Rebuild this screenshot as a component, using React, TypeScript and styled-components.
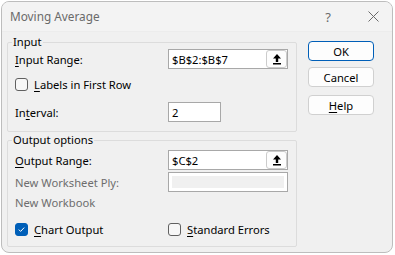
import React, { FC } from "react"
import styled, { createGlobalStyle } from "styled-components"

const GlobalStyle = createGlobalStyle`
  html, body {
    margin: 0;
    background: #ffffff;
  }
  body {
    font-family: "Segoe UI", "Noto Sans", sans-serif;
    font-size: 11.2px;
    color: #000000;
  }
`

const Window = styled.div`
  box-sizing: border-box;
  margin: 1px 0 0 1px;
  width: 392px;
  height: 252px;
  border: 1px solid #bdbdbd;
  border-radius: 8px;
  overflow: hidden;
  background: #f0f0f0;
  display: flex;
  flex-direction: column;
`

const TitleBar = styled.div`
  height: 29px;
  display: flex;
  align-items: center;
  padding-left: 8px;
  background: #f3f3f3;
  border-bottom: 1px solid #ececec;
`

const Title = styled.span`
  flex: 1;
  color: #6a6a6a;
  font-size: 11.8px;
  padding-bottom: 1px;
`

const TitleButton = styled.span<{ $w: number }>`
  width: ${p => p.$w}px;
  height: 29px;
  display: flex;
  align-items: center;
  justify-content: center;
  color: #6a6a6a;
  font-size: 13px;
`

const Body = styled.div`
  display: flex;
  padding: 3px 0 0 5px;
`

const Groups = styled.div`
  width: 290px;
  display: flex;
  flex-direction: column;
  gap: 1px;
`

const Group = styled.fieldset<{ $pt: number; $pb: number }>`
  margin: 0;
  padding: ${p => p.$pt}px 7px ${p => p.$pb}px 7px;
  border: 1px solid #dcdcdc;
  border-radius: 2px;
  min-width: 0;
`

const Legend = styled.legend`
  margin-left: -3px;
  padding: 0 1px;
  height: 14px;
  line-height: 14px;
`

const Row = styled.div<{ $mt?: number }>`
  display: grid;
  grid-template-columns: 153px 120px;
  align-items: center;
  height: 20px;
  margin-top: ${p => p.$mt ?? 0}px;
`

const Label = styled.span<{ $disabled?: boolean }>`
  color: ${p => (p.$disabled ? "#6d6d6d" : "#000000")};
  white-space: nowrap;
`

const Key = styled.span`
  text-decoration: underline;
  text-underline-offset: 2px;
  text-decoration-thickness: 1px;
`

const TextBox = styled.div<{ $w?: number }>`
  box-sizing: border-box;
  width: ${p => p.$w ?? 120}px;
  height: 20px;
  border: 1px solid #a8a8a8;
  background: #ffffff;
  display: flex;
  align-items: center;
  padding-left: 3px;
`

const DisabledBox = styled.div`
  box-sizing: border-box;
  width: 120px;
  height: 20px;
  border: 1px solid #a8a8a8;
  background: #f0f0f0;
  box-shadow: inset 0 0 0 3px #ffffff;
`

const BoxText = styled.span`
  flex: 1;
`

const RefButton = styled.span`
  box-sizing: border-box;
  width: 21px;
  height: 18px;
  border: 1px solid #cccccc;
  border-radius: 3px;
  background: #fdfdfd;
  display: flex;
  align-items: center;
  justify-content: center;
`

const CheckWrap = styled.span`
  display: flex;
  align-items: center;
  gap: 6px;
  white-space: nowrap;
`

const Box = styled.span<{ $checked?: boolean }>`
  box-sizing: border-box;
  width: 13px;
  height: 13px;
  border-radius: 3px;
  border: 1px solid ${p => (p.$checked ? "#005fb8" : "#606060")};
  background: ${p => (p.$checked ? "#005fb8" : "#f7f7f7")};
  display: flex;
  align-items: center;
  justify-content: center;
`

const Buttons = styled.div`
  margin: 6px 0 0 11px;
  display: flex;
  flex-direction: column;
`

const Button = styled.div<{ $default?: boolean; $mt?: number }>`
  box-sizing: border-box;
  width: 66px;
  height: 20px;
  margin-top: ${p => p.$mt ?? 0}px;
  border: 1px solid ${p => (p.$default ? "#005fb8" : "#d0d0d0")};
  border-radius: 4px;
  background: #fdfdfd;
  display: flex;
  align-items: center;
  justify-content: center;
`

const UpArrow: FC = () => (
  <svg width="10" height="12" viewBox="0 0 10 12">
    <path d="M5 1 L9 5.5 L6.2 5.5 L6.2 9 L3.8 9 L3.8 5.5 L1 5.5 Z" fill="#000" />
    <rect x="1" y="10" width="8" height="1.5" fill="#000" />
  </svg>
)

const CheckMark: FC = () => (
  <svg width="11" height="11" viewBox="0 0 11 11">
    <path d="M2.8 5.6 L4.6 7.4 L8.2 3.6" stroke="#fff" strokeWidth="1" fill="none" />
  </svg>
)

const Checkbox: FC<{ checked?: boolean; children: React.ReactNode }> = ({ checked, children }) => (
  <CheckWrap>
    <Box $checked={checked}>{checked && <CheckMark />}</Box>
    <Label>{children}</Label>
  </CheckWrap>
)

const App: FC = () => {
  return (
    <>
      <GlobalStyle />
      <Window>
        <TitleBar>
          <Title>Moving Average</Title>
          <TitleButton $w={46}>?</TitleButton>
          <TitleButton $w={3} />
          <TitleButton $w={38}>
            <svg width="11" height="11" viewBox="0 0 11 11">
              <path d="M0.5 0.5 L10.5 10.5 M10.5 0.5 L0.5 10.5" stroke="#6a6a6a" strokeWidth="1" />
            </svg>
          </TitleButton>
        </TitleBar>
        <Body>
          <Groups>
            <Group $pt={0} $pb={9}>
              <Legend>Input</Legend>
              <Row>
                <Label>
                  <Key>I</Key>nput Range:
                </Label>
                <TextBox>
                  <BoxText>$B$2:$B$7</BoxText>
                  <RefButton>
                    <UpArrow />
                  </RefButton>
                </TextBox>
              </Row>
              <Row $mt={5}>
                <Checkbox>
                  <Key>L</Key>abels in First Row
                </Checkbox>
              </Row>
              <Row $mt={8}>
                <Label>
                  In<Key>t</Key>erval:
                </Label>
                <TextBox $w={53}>
                  <BoxText>2</BoxText>
                </TextBox>
              </Row>
            </Group>
            <Group $pt={3} $pb={7}>
              <Legend>Output options</Legend>
              <Row>
                <Label>
                  <Key>O</Key>utput Range:
                </Label>
                <TextBox>
                  <BoxText>$C$2</BoxText>
                  <RefButton>
                    <UpArrow />
                  </RefButton>
                </TextBox>
              </Row>
              <Row $mt={2}>
                <Label $disabled>New Worksheet Ply:</Label>
                <DisabledBox />
              </Row>
              <Row>
                <Label $disabled>New Workbook</Label>
              </Row>
              <Row $mt={7}>
                <Checkbox checked>
                  <Key>C</Key>hart Output
                </Checkbox>
                <Checkbox>
                  <Key>S</Key>tandard Errors
                </Checkbox>
              </Row>
            </Group>
          </Groups>
          <Buttons>
            <Button $default>OK</Button>
            <Button $mt={6}>Cancel</Button>
            <Button $mt={8}>
              <span>
                <Key>H</Key>elp
              </span>
            </Button>
          </Buttons>
        </Body>
      </Window>
    </>
  )
}

export default App
